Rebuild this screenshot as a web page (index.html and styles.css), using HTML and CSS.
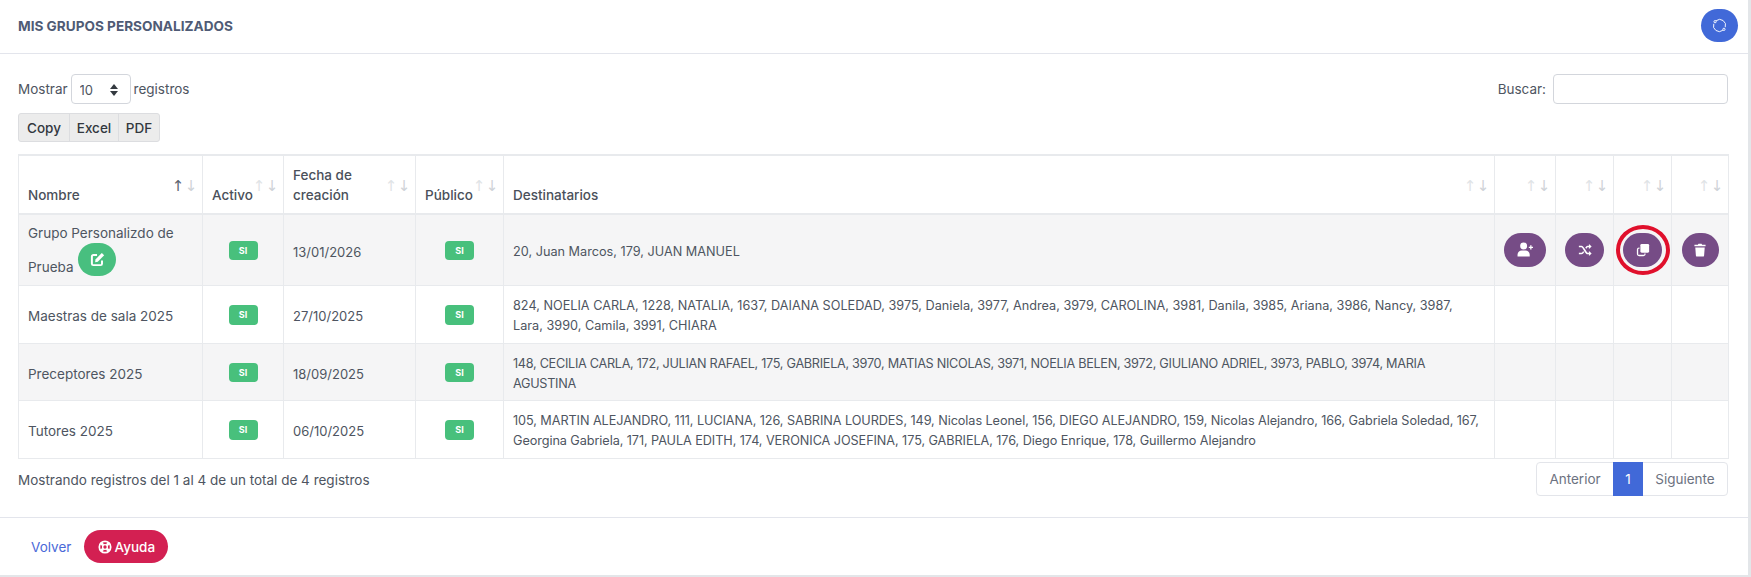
FILE: index.html
```html
<!DOCTYPE html>
<html lang="es">
  <head>
    <meta charset="UTF-8" />
    <title>Mis grupos personalizados</title>
    <link rel="stylesheet" href="styles.css">
  </head>
  <body>
    <div class="card">
      <div class="card-header">
        <h3>MIS GRUPOS PERSONALIZADOS</h3>
        <button class="btn-refresh" type="button">
          <svg viewBox="0 0 16 16" width="15" height="15" fill="none" stroke="#fff" stroke-width="1">
            <path d="M4.400 2.900A6.200 6.200 0 0 1 14.100 9.800" />
            <path d="M11.600 13.100A6.200 6.200 0 0 1 1.900 6.200" />
            <circle cx="3.300" cy="3.900" r="1.200" />
            <circle cx="12.700" cy="12.100" r="1.200" />
          </svg>
        </button>
      </div>

      <div class="card-body">
        <div class="table-tools">
          <label class="length">
            Mostrar
            <span class="select-wrap">
              <select><option>10</option><option>25</option><option>50</option></select>
            </span>
            registros
          </label>
          <label class="search">Buscar: <input type="search" /></label>
        </div>

        <div class="export-btns">
          <button type="button">Copy</button>
          <button type="button">Excel</button>
          <button type="button">PDF</button>
        </div>

        <table class="groups">
          <colgroup>
            <col class="c-name" /><col class="c-active" /><col class="c-date" /><col class="c-public" />
            <col class="c-dest" /><col class="c-a1" /><col class="c-a2" /><col class="c-a3" /><col class="c-a4" />
          </colgroup>
          <thead>
            <tr>
              <th class="sorted">Nombre<span class="up">↑</span><span class="down">↓</span></th>
              <th>Activo<span class="up">↑</span><span class="down">↓</span></th>
              <th>Fecha de<br />creación<span class="up">↑</span><span class="down">↓</span></th>
              <th>Público<span class="up">↑</span><span class="down">↓</span></th>
              <th>Destinatarios<span class="up">↑</span><span class="down">↓</span></th>
              <th><span class="up">↑</span><span class="down">↓</span></th>
              <th><span class="up">↑</span><span class="down">↓</span></th>
              <th><span class="up">↑</span><span class="down">↓</span></th>
              <th><span class="up">↑</span><span class="down">↓</span></th>
            </tr>
          </thead>
          <tbody>
            <tr class="row-a odd">
              <td class="name-edit">Grupo Personalizdo de<br />Prueba
                <a class="btn-edit" href="#">
                  <svg viewBox="0 0 16 16" width="15" height="15" fill="none" stroke="#fff" stroke-width="2.100">
                    <path d="M7.500 3.200H3.600A1.600 1.600 0 0 0 2 4.800V12.400A1.600 1.600 0 0 0 3.600 14H11.200A1.600 1.600 0 0 0 12.800 12.400V9" />
                    <path d="M5.800 7.900 12.600 1 15.100 3.500 8.300 10.400 5.500 10.800Z" fill="#fff" stroke="none" />
                  </svg>
                </a>
              </td>
              <td class="mid"><span class="badge">SI</span></td>
              <td class="date">13/01/2026</td>
              <td class="mid"><span class="badge">SI</span></td>
              <td class="dest">20, Juan Marcos, 179, JUAN MANUEL</td>
              <td class="mid">
                <a class="btn-action wide" href="#">
                  <svg viewBox="0 0 18 16" width="17" height="15" fill="#fff">
                    <circle cx="7" cy="4.300" r="3.700" />
                    <path d="M0.500 15.500V13.500C0.500 10.800 2.500 9 5 9H9C11.500 9 13.500 10.800 13.500 13.500V15.500Z" />
                    <path d="M14.700 3.500V8M12.500 5.750H17" stroke="#fff" stroke-width="1.400" fill="none" />
                  </svg>
                </a>
              </td>
              <td class="mid">
                <a class="btn-action" href="#">
                  <svg viewBox="0 0 16 16" width="14" height="14" fill="none" stroke="#fff" stroke-width="1.800">
                    <path d="M1 4H4C6.500 4 8.500 12 11 12H13" />
                    <path d="M1 12H4C5 12 5.800 11 6.500 9.800M9 6C9.600 4.900 10.200 4 11 4H13" />
                    <path d="M12.500 1.200 15.600 4 12.500 6.800ZM12.500 9.200 15.600 12 12.500 14.800Z" fill="#fff" stroke="none" />
                  </svg>
                </a>
              </td>
              <td class="mid">
                <a class="btn-action" href="#">
                  <svg viewBox="0 0 16 16" width="14" height="14" fill="#fff">
                    <rect x="5" y="1" width="10" height="10" rx="1.500" />
                    <path d="M3.500 5H4V6.500H3A.5.5 0 0 0 2.500 7V13A.5.5 0 0 0 3 13.500H9A.5.5 0 0 0 9.500 13V12H11V12.500A2.500 2.500 0 0 1 8.500 15H3.500A2.500 2.500 0 0 1 1 12.500V7.500A2.500 2.500 0 0 1 3.500 5Z" />
                  </svg>
                </a>
              </td>
              <td class="mid">
                <a class="btn-action narrow" href="#">
                  <svg viewBox="0 0 14 16" width="12" height="14" fill="#fff">
                    <path d="M0.500 2H4.500L5.200 .700H8.800L9.500 2H13.500V3.700H.5Z" />
                    <path d="M1.500 5H12.500L11.800 14.300A1.500 1.500 0 0 1 10.300 15.700H3.700A1.500 1.500 0 0 1 2.200 14.300Z" />
                  </svg>
                </a>
              </td>
            </tr>
            <tr class="row-b">
              <td>Maestras de sala 2025</td>
              <td class="mid"><span class="badge tall">SI</span></td>
              <td class="date">27/10/2025</td>
              <td class="mid"><span class="badge tall">SI</span></td>
              <td class="dest">824, NOELIA CARLA, 1228, NATALIA, 1637, DAIANA SOLEDAD, 3975, Daniela, 3977, Andrea, 3979, CAROLINA, 3981, Danila, 3985, Ariana, 3986, Nancy, 3987,<br />Lara, 3990, Camila, 3991, CHIARA</td>
              <td></td><td></td><td></td><td></td>
            </tr>
            <tr class="row-c odd">
              <td>Preceptores 2025</td>
              <td class="mid"><span class="badge">SI</span></td>
              <td class="date">18/09/2025</td>
              <td class="mid"><span class="badge">SI</span></td>
              <td class="dest caps">148, CECILIA CARLA, 172, JULIAN RAFAEL, 175, GABRIELA, 3970, MATIAS NICOLAS, 3971, NOELIA BELEN, 3972, GIULIANO ADRIEL, 3973, PABLO, 3974, MARIA<br />AGUSTINA</td>
              <td></td><td></td><td></td><td></td>
            </tr>
            <tr class="row-b">
              <td>Tutores 2025</td>
              <td class="mid"><span class="badge tall">SI</span></td>
              <td class="date">06/10/2025</td>
              <td class="mid"><span class="badge tall">SI</span></td>
              <td class="dest long">105, MARTIN ALEJANDRO, 111, LUCIANA, 126, SABRINA LOURDES, 149, Nicolas Leonel, 156, DIEGO ALEJANDRO, 159, Nicolas Alejandro, 166, Gabriela Soledad, 167,<br />Georgina Gabriela, 171, PAULA EDITH, 174, VERONICA JOSEFINA, 175, GABRIELA, 176, Diego Enrique, 178, Guillermo Alejandro</td>
              <td></td><td></td><td></td><td></td>
            </tr>
          </tbody>
        </table>

        <div class="table-foot">
          <div class="info">Mostrando registros del 1 al 4 de un total de 4 registros</div>
          <div class="pager">
            <a class="prev" href="#">Anterior</a>
            <a class="current" href="#">1</a>
            <a class="next" href="#">Siguiente</a>
          </div>
        </div>
      </div>

      <div class="card-footer">
        <a class="back" href="#">Volver</a>
        <a class="btn-help" href="#">
          <svg viewBox="0 0 16 16" width="14" height="14" fill="none" stroke="#fff">
            <circle cx="8" cy="8" r="6.500" stroke-width="2" />
            <circle cx="8" cy="8" r="2.700" stroke-width="1.600" />
            <path d="M3.400 3.400 6 6M12.600 3.400 10 6M3.400 12.600 6 10M12.600 12.600 10 10" stroke-width="3" />
          </svg>
          Ayuda
        </a>
      </div>

      <span class="mark"></span>
    </div>
  </body>
</html>
```

FILE: styles.css
```css
* {
  box-sizing: border-box;
}

body {
  margin: 0;
  height: 577px;
  overflow: hidden;
  background-color: #e3e6e9;
  font-family: Inter, "Open Sans", sans-serif;
  font-size: 13.5px;
  color: #4e5561;
}

a {
  text-decoration: none;
}

.card {
  position: relative;
  width: 1748px;
  height: 575px;
  background-color: #fff;
}

.card-header {
  display: flex;
  justify-content: space-between;
  align-items: flex-start;
  height: 54px;
  padding: 9px 10px 0 18px;
  border-bottom: 1px solid #e3e5ec;
}

.card-header h3 {
  margin: 0;
  padding-top: 9px;
  font-size: 13.6px;
  line-height: 17px;
  font-weight: 700;
  color: #4f5b75;
}

.btn-refresh {
  display: flex;
  justify-content: center;
  align-items: center;
  width: 37px;
  height: 33px;
  padding: 0;
  border: 0;
  border-radius: 17px;
  background-color: #4169d8;
}

.card-body {
  height: 464px;
  padding: 20px 20px 0 18px;
  border-bottom: 1px solid #e3e5ec;
}

.table-tools {
  display: flex;
  justify-content: space-between;
  height: 30px;
}

.length,
.search {
  display: flex;
  align-items: center;
  gap: 3px;
}

.search {
  gap: 7px;
}

.length {
  padding-bottom: 1px;
}

.select-wrap {
  position: relative;
  display: block;
  width: 60px;
  height: 30px;
}

.select-wrap select {
  width: 100%;
  height: 100%;
  padding: 2px 0 0 8px;
  border: 1px solid #d3d6dc;
  border-radius: 4px;
  appearance: none;
  background-color: #fff;
  font: inherit;
  font-size: 13px;
  color: #4e5561;
}

.select-wrap::before,
.select-wrap::after {
  content: "";
  position: absolute;
  left: 39px;
  border-left: 4px solid transparent;
  border-right: 4px solid transparent;
}

.select-wrap::before {
  top: 10px;
  border-bottom: 5px solid #343a40;
}

.select-wrap::after {
  top: 17px;
  border-top: 5px solid #343a40;
}

.search input {
  width: 175px;
  height: 30px;
  border: 1px solid #d3d6dc;
  border-radius: 4px;
  background-color: #fff;
}

.export-btns {
  display: flex;
  width: 142px;
  height: 29px;
  margin-top: 9px;
  border: 1px solid #dcdde0;
  border-radius: 3px;
  background-color: #ececec;
}

.export-btns button {
  padding: 0;
  border: 0;
  border-left: 1px solid #dcdde0;
  background: none;
  font: inherit;
  font-weight: 500;
  color: #33383f;
}

.export-btns button:nth-child(1) {
  width: 50px;
  border-left: 0;
}

.export-btns button:nth-child(2) {
  width: 49px;
}

.export-btns button:nth-child(3) {
  width: 41px;
}

.groups {
  width: 1710px;
  margin-top: 12px;
  border-collapse: collapse;
  table-layout: fixed;
  line-height: 20px;
}

.c-name { width: 184px; }
.c-active { width: 81px; }
.c-date { width: 132px; }
.c-public { width: 88px; }
.c-dest { width: 991px; }
.c-a1 { width: 61px; }
.c-a2 { width: 58px; }
.c-a3 { width: 58px; }
.c-a4 { width: 57px; }

.groups th,
.groups td {
  padding: 0 9px;
  border: 1px solid #e8eaed;
}

.groups td {
  padding-top: 4px;
}

.groups th {
  position: relative;
  height: 59px;
  padding-top: 8px;
  padding-bottom: 8px;
  border-top: 2px solid #e8eaed;
  border-bottom: 2px solid #e8eaed;
  text-align: left;
  vertical-align: bottom;
  font-weight: 500;
  color: #4a505a;
}

.groups .up,
.groups .down {
  position: absolute;
  top: 20px;
  width: 14px;
  font-family: "DejaVu Sans", sans-serif;
  font-size: 15px;
  font-weight: 400;
  text-align: center;
  color: #dfe3e6;
}

.groups .up {
  right: 17px;
}

.groups .down {
  right: 4px;
  color: #cfd3d8;
}

.groups th.sorted .up {
  color: #5a626e;
}

.row-a td { height: 71px; }
.row-b td { height: 58px; }
.row-c td { height: 57px; }

.odd td {
  background-color: #f5f5f6;
}

.groups .date {
  font-size: 13px;
}

.groups .dest {
  font-size: 12.7px;
  white-space: nowrap;
}

/* these two rows are mostly capitals, which run wide in this font */
.groups .dest.caps {
  letter-spacing: -0.3px;
}

.groups .dest.long {
  letter-spacing: -0.08px;
}

.groups .mid {
  padding-top: 0;
  text-align: center;
}

.groups .name-edit {
  padding-top: 0;
}

.badge {
  display: inline-block;
  width: 29px;
  height: 19px;
  border-radius: 4px;
  background-color: #48c07c;
  font-size: 9px;
  font-weight: 700;
  line-height: 19px;
  color: #fff;
  vertical-align: middle;
}

.badge.tall {
  height: 20px;
  line-height: 20px;
}

.btn-edit {
  display: inline-flex;
  justify-content: center;
  align-items: center;
  width: 38px;
  height: 33px;
  margin-left: 1px;
  border-radius: 17px;
  background-color: #48bf7f;
  vertical-align: 5px;
}

.btn-action {
  display: inline-flex;
  justify-content: center;
  align-items: center;
  width: 39px;
  height: 34px;
  margin: 0 -5px;
  border-radius: 17px;
  background-color: #764c86;
  vertical-align: middle;
}

.btn-action.wide {
  width: 42px;
}

.btn-action.narrow {
  width: 37px;
}

.table-foot {
  display: flex;
  justify-content: space-between;
  margin-top: 3px;
}

.info {
  padding-top: 10px;
}

.pager {
  display: flex;
  height: 34px;
  border: 1px solid #e3e5ea;
  border-radius: 4px;
  line-height: 32px;
}

.pager a {
  color: #6c7280;
}

.pager .prev {
  width: 76px;
  text-align: center;
}

.pager .current {
  width: 30px;
  margin: -1px 0;
  background-color: #4169d8;
  line-height: 34px;
  text-align: center;
  color: #fff;
}

.pager .next {
  width: 84px;
  text-align: center;
}

.card-footer {
  display: flex;
  align-items: center;
  gap: 13px;
  height: 57px;
  padding: 0 0 0 31px;
}

.back {
  color: #4a69d8;
}

.btn-help {
  display: inline-flex;
  justify-content: center;
  align-items: center;
  gap: 3px;
  width: 84px;
  height: 33px;
  border-radius: 17px;
  background-color: #d32052;
  font-size: 13.5px;
  font-weight: 500;
  color: #fff;
}

/* red ring painted over the copy button */
.mark {
  position: absolute;
  left: 1616px;
  top: 225px;
  width: 54px;
  height: 50px;
  border: 4px solid #e0102c;
  border-radius: 50%;
}
```
